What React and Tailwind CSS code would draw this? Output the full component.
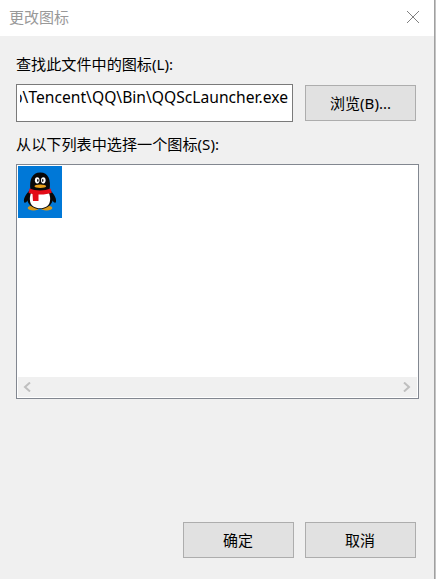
import React from 'react';

function Label({ children, width }) {
  return (
    <svg className="block h-5 overflow-visible" width={width} height="20">
      <text x="0" y="15" textLength={width} lengthAdjust="spacingAndGlyphs" fill="currentColor">
        {children}
      </text>
    </svg>
  );
}

function Button({ children, width }) {
  return (
    <button className="flex h-9 w-[111px] items-center justify-center border border-[#adadad] bg-[#e1e1e1] pr-px pt-px">
      <Label width={width}>{children}</Label>
    </button>
  );
}

function Penguin() {
  return (
    <svg width="44" height="52" viewBox="0 0 44 52">
      <ellipse cx="15.500" cy="42" rx="5.800" ry="2.400" fill="#d99a1c" />
      <ellipse cx="28.500" cy="42" rx="5.800" ry="2.400" fill="#d99a1c" />
      <path d="M12 24C8 28 5.500 32 6 35.500c.4 2.500 2.500.8 4-1.500h24c1.500 2.300 3.600 4 4 1.500C38.500 32 36 28 32 24Z" fill="#080808" />
      <ellipse cx="22" cy="32.500" rx="12.800" ry="10.500" fill="#080808" />
      <path d="M13 27h18c2.500 7 1.500 15-9 15.300C11.500 42 10.500 34 13 27Z" fill="#fff" />
      <path d="M12.500 24C11 14 14 6.500 22.300 6.500S33 14 31.500 24Z" fill="#080808" />
      <ellipse cx="19.200" cy="14.300" rx="2.300" ry="3.100" fill="#fff" />
      <ellipse cx="25.300" cy="14.300" rx="2.300" ry="3.100" fill="#fff" />
      <ellipse cx="19.800" cy="14.500" rx=".8" ry="1.400" fill="#222" />
      <ellipse cx="24.700" cy="14.500" rx=".8" ry="1.400" fill="#222" />
      <ellipse cx="22.300" cy="20.300" rx="5.800" ry="1.700" fill="#e8a11a" />
      <path d="M11.500 22.500c6 2.500 15 2.500 21 0l1.300 4.300C30 28.300 25 28.700 20.500 28.500V35h-5.500l-.5-7-4-1Z" fill="#e30c18" />
    </svg>
  );
}

export default function App() {
  return (
    <div className="flex h-[579px] w-[436px] border-r border-[#c4c4c4] bg-[#f0f0f0] font-['Noto_Sans','Noto_Sans_CJK_SC',sans-serif] text-[15px] leading-5 text-black">
      <div className="flex w-[435px] flex-col border-r border-[#a0a0a0]">
        <header className="flex h-9 shrink-0 items-center justify-between bg-white pl-[9px] pr-[14px] text-[#999]">
          <Label width={60}>更改图标</Label>
          <svg width="14" height="14" viewBox="0 0 14 14" className="mb-[3px]">
            <path d="M1 1l12 12M13 1L1 13" fill="none" stroke="#808080" />
          </svg>
        </header>
        <main className="flex grow flex-col pl-4 pt-[19px]">
          <Label width={157}>查找此文件中的图标(L):</Label>
          <div className="mt-[9px] flex gap-3">
            <div className="flex h-[38px] w-[277px] border border-[#7a7a7a] bg-white pl-[3px] pr-[4px] pt-[3px] text-[16px]">
              <div className="flex w-[268px] justify-end overflow-hidden">
                <div className="shrink-0">
                  <Label width={275}>p\Tencent\QQ\Bin\QQScLauncher.exe</Label>
                </div>
              </div>
            </div>
            <div className="pt-px">
              <Button width={61}>浏览(B)...</Button>
            </div>
          </div>
          <div className="mt-[13px]">
            <Label width={203}>从以下列表中选择一个图标(S):</Label>
          </div>
          <section className="mt-[9px] flex h-[235px] w-[403px] flex-col justify-between border border-[#828790] bg-white p-px">
            <div className="h-[52px] w-11 bg-[#0078d7]">
              <Penguin />
            </div>
            <div className="flex h-5 items-center justify-between bg-[#f0f0f0] pb-px pl-[5px] pr-[6px]">
              <svg width="8" height="10" viewBox="0 0 8 10">
                <path d="M7 .5L2 5l5 4.500" fill="none" stroke="#bfbfbf" strokeWidth="2" />
              </svg>
              <svg width="8" height="10" viewBox="0 0 8 10">
                <path d="M1 .5L6 5 1 9.500" fill="none" stroke="#bfbfbf" strokeWidth="2" />
              </svg>
            </div>
          </section>
          <footer className="mt-[123px] flex gap-[11px] pl-[167px]">
            <Button width={30}>确定</Button>
            <Button width={30}>取消</Button>
          </footer>
        </main>
      </div>
    </div>
  );
}
